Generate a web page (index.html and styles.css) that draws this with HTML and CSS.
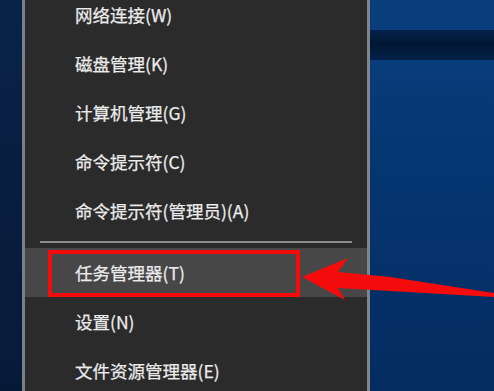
FILE: index.html
```html
<!DOCTYPE html>
<html lang="zh-CN">
  <head>
    <meta charset="UTF-8" />
    <title>快速链接菜单</title>
    <link rel="stylesheet" href="styles.css">
  </head>
  <body>
    <div class="screen">
      <div class="strip"></div>

      <ul class="menu">
        <li class="item">网络连接(W)</li>
        <li class="item">磁盘管理(K)</li>
        <li class="item">计算机管理(G)</li>
        <li class="item">命令提示符(C)</li>
        <li class="item">命令提示符(管理员)(A)</li>
        <li class="sep"></li>
        <li class="item active">任务管理器(T)</li>
        <li class="item">设置(N)</li>
        <li class="item">文件资源管理器(E)</li>
      </ul>

      <div class="desktop">
        <div class="band"></div>
      </div>

      <!-- annotation drawn over the screenshot -->
      <svg class="mark" width="494" height="391" viewBox="0 0 494 391">
        <rect x="50" y="252" width="248" height="43" fill="none" stroke="#f40c0c" stroke-width="4" />
        <polygon points="302,277 348,258 338,272 390,277 494,293 494,297 390,291 338,288 345,300" fill="#f40c0c" />
      </svg>
    </div>
  </body>
</html>
```

FILE: styles.css
```css
html,
body {
  margin: 0;
  padding: 0;
  background: #062c5e;
  overflow: hidden;
}
.screen {
  position: relative;
  display: flex;
  width: 494px;
  height: 391px;
  overflow: hidden;
}
.strip {
  width: 22px;
  background: linear-gradient(#0a2248, #061a38);
  border-right: 3px solid #7b8088;
}
.menu {
  list-style: none;
  margin: -10px 0 0;
  padding: 0;
  width: 342px;
  background: #2b2b2b;
  border-right: 3px solid #80848c;
  font-family: "Noto Sans CJK SC", "Noto Sans", sans-serif;
  font-size: 17.5px;
  color: #ececec;
  -webkit-text-stroke: 0.25px #ececec;
}
.item {
  height: 49px;
  line-height: 49px;
  padding-left: 50px;
}
.item.active {
  background: #474747;
}
.sep {
  height: 13px;
  display: flex;
  align-items: center;
  padding: 0 15px;
}
.sep::before {
  content: "";
  flex: 1;
  height: 2px;
  background: #8a8a8a;
}
.desktop {
  flex: 1;
  display: flex;
  flex-direction: column;
  padding-top: 30px;
  background: linear-gradient(#0a3f7e, #053672 40%, #042c60);
}
.band {
  height: 30px;
  background: linear-gradient(#04214a, #021733 50%, #04214a);
}
.mark {
  position: absolute;
  top: 0;
  left: 0;
}
```
